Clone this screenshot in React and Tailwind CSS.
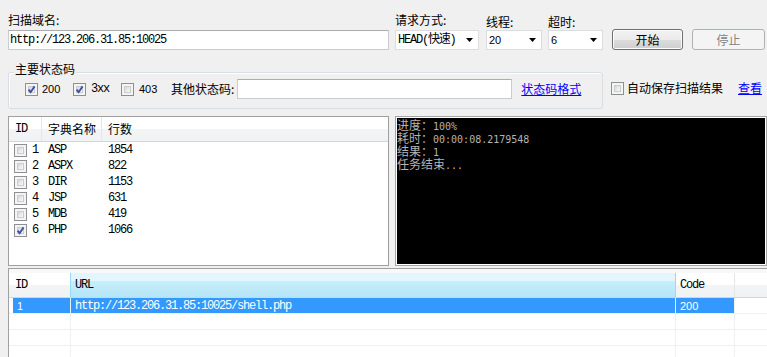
import React from "react";

const CJK = "[font-family:'Noto_Sans_CJK_SC','Liberation_Sans',sans-serif]";
const MONO = "[font-family:'Liberation_Mono','Noto_Sans_CJK_SC',monospace] text-[12px] tracking-[-1.2px]";
const SANS = "[font-family:'Liberation_Sans','Noto_Sans_CJK_SC',sans-serif] text-[11px]";
const HDR = "bg-[linear-gradient(#ffffff_0%,#ffffff_50%,#f3f4f6_50%,#f1f2f4_100%)]";
const CMONO = "text-[10px] leading-[13px] [font-family:'DejaVu_Sans_Mono',monospace]";

function Check({ checked = false }) {
  return (
    <span className="relative inline-block w-[13px] h-[13px] shrink-0 border border-[#8e8f8f] bg-[#f4f4f4]">
      <span className="absolute inset-[2px] border border-[#c9ccd0] bg-[linear-gradient(135deg,#d3d5d9_0%,#eceded_60%,#f8f8f8_100%)]" />
      {checked && (
        <svg className="absolute inset-0" width="11" height="11" viewBox="0 0 11 11">
          <path d="M2.6 5.6 L4.6 8.2 L8.6 2.4" fill="none" stroke="#3b54a3" strokeWidth="1.9" />
        </svg>
      )}
    </span>
  );
}

function Arrow() {
  return (
    <svg width="7" height="4" viewBox="0 0 7 4" className="shrink-0">
      <path d="M0 0 H7 L3.5 4 Z" fill="#000000" />
    </svg>
  );
}

function Select({ className, children }) {
  return (
    <div className={"h-[20px] border border-[#dadde2] bg-white flex items-center justify-between pl-[2px] pr-[5px] " + className}>
      <div className="flex items-center">{children}</div>
      <Arrow />
    </div>
  );
}

const dictRows = [
  ["1", "ASP", "1854", false],
  ["2", "ASPX", "822", false],
  ["3", "DIR", "1153", false],
  ["4", "JSP", "631", false],
  ["5", "MDB", "419", false],
  ["6", "PHP", "1066", true],
];

export default function App() {
  return (
    <div className={"w-[767px] h-[357px] overflow-hidden bg-[#f0f0f0] text-[12px] leading-[14px] text-black pt-[12px] " + CJK}>
      {/* Row 1 */}
      <div className="flex pl-[8px] h-[38px]">
        <div className="w-[381px] flex flex-col">
          <div className="h-[18px] leading-[16px]">扫描域名:</div>
          <div className="h-[20px] border border-[#c9cdd3] border-t-[#abadb3] bg-white flex items-center pl-[1px]">
            <span className={MONO}>http://123.206.31.85:10025</span>
          </div>
        </div>
        <div className="ml-[6px] w-[84px] flex flex-col">
          <div className="h-[18px] leading-[16px]">请求方式:</div>
          <Select className="w-[84px]">
            <span className={MONO}>HEAD(快速)</span>
          </Select>
        </div>
        <div className="ml-[7px] w-[56px] flex flex-col">
          <div className="h-[18px] leading-[16px] pt-[2px]">线程:</div>
          <Select className="w-[56px]">
            <span className={SANS}>20</span>
          </Select>
        </div>
        <div className="ml-[6px] w-[55px] flex flex-col">
          <div className="h-[18px] leading-[16px] pt-[2px]">超时:</div>
          <Select className="w-[55px]">
            <span className={SANS}>6</span>
          </Select>
        </div>
        <div className="ml-[9px] mt-[17px] w-[71px] h-[21px] rounded-[3px] border border-[#707070] bg-[linear-gradient(#f2f2f2_0%,#ebebeb_50%,#dddddd_50%,#cfcfcf_100%)] shadow-[inset_0_0_0_1px_#fcfcfc] flex items-center justify-center">
          开始
        </div>
        <div className="ml-[9px] mt-[17px] w-[73px] h-[21px] rounded-[3px] border border-[#adb2b5] bg-[#f4f4f4] text-[#838383] flex items-center justify-center">
          停止
        </div>
      </div>

      {/* Row 2 */}
      <div className="flex mt-[22px] pl-[8px]">
        <div className="w-[595px] h-[37px] border border-[#d5dfe5] rounded-[3px] shadow-[inset_1px_1px_0_#ffffff]">
          <div className="-mt-[11px] ml-[5px] w-fit px-[1px] bg-[#f0f0f0] leading-[14px] h-[14px]">主要状态码</div>
          <div className="flex items-center mt-[3px] pl-[16px] h-[20px]">
            <div className="w-[48px] flex items-center">
              <Check checked />
              <span className={"ml-[4px] " + SANS}>200</span>
            </div>
            <div className="w-[48px] flex items-center">
              <Check checked />
              <span className={"ml-[5px] " + MONO}>3xx</span>
            </div>
            <div className="w-[50px] flex items-center">
              <Check />
              <span className={"ml-[5px] " + SANS}>403</span>
            </div>
            <span>其他状态码:</span>
            <div className="ml-[3px] w-[275px] h-[20px] border border-[#c9cdd3] border-t-[#abadb3] bg-white" />
            <span className="ml-[9px] text-[#0000ff] underline">状态码格式</span>
          </div>
        </div>
        <div className="flex items-center ml-[8px] mt-[9px] h-[14px]">
          <Check />
          <span className="ml-[3px]">自动保存扫描结果</span>
          <span className="ml-[15px] text-[#0000ff] underline">查看</span>
        </div>
      </div>

      {/* Row 3 */}
      <div className="flex mt-[7px] pl-[8px] h-[150px]">
        <div className="w-[381px] h-full border border-[#a0a0a0] bg-white">
          <div className={"flex h-[25px] border-b border-[#d5d5d5] " + HDR}>
            <div className={"w-[33px] border-r border-[#e3e6ea] pl-[6px] flex items-center " + MONO}>ID</div>
            <div className="w-[60px] border-r border-[#e3e6ea] pl-[6px] flex items-center">字典名称</div>
            <div className="flex-1 pl-[6px] flex items-center">行数</div>
          </div>
          {dictRows.map(([id, name, count, checked]) => (
            <div key={id} className="flex items-center h-[16px] pl-[5px]">
              <Check checked={checked} />
              <span className={"ml-[5px] w-[16px] " + MONO}>{id}</span>
              <span className={"w-[60px] " + MONO}>{name}</span>
              <span className={MONO}>{count}</span>
            </div>
          ))}
        </div>
        <div className="ml-[6px] w-[372px] h-full border border-[#a5a5a5] bg-white p-[1px]">
          <div className="w-full h-full bg-black text-[#b4b4b4] leading-[13px]">
            <div className="flex items-baseline h-[13px]">
              <span className="text-[12px] leading-[13px]">进度：</span>
              <span className={CMONO}>100%</span>
            </div>
            <div className="flex items-baseline h-[13px]">
              <span className="text-[12px] leading-[13px]">耗时：</span>
              <span className={CMONO}>00:00:08.2179548</span>
            </div>
            <div className="flex items-baseline h-[13px]">
              <span className="text-[12px] leading-[13px]">结果：</span>
              <span className={CMONO}>1</span>
            </div>
            <div className="flex items-baseline h-[13px]">
              <span className="text-[12px] leading-[13px]">任务结束</span>
              <span className={CMONO}>...</span>
            </div>
          </div>
        </div>
      </div>

      {/* Row 4 */}
      <div className="mt-[2px] ml-[8px] w-[770px] h-[100px] border border-[#a0a0a0] bg-white">
        <div className="h-[4px] bg-[#f8f8f8]" />
        <div className="flex h-[25px] border-b border-[#d5d5d5]">
          <div className={"w-[61px] pl-[6px] flex items-center " + HDR + " " + MONO}>ID</div>
          <div className={"w-[606px] border-l border-r border-[#96d9f9] bg-[linear-gradient(#e4f6fd_0%,#e4f6fd_32%,#c9eefb_32%,#b4e5f7_100%)] pl-[4px] flex items-center " + MONO}>URL</div>
          <div className={"w-[59px] border-r border-[#e3e6ea] pl-[4px] flex items-center " + HDR + " " + MONO}>Code</div>
          <div className={"flex-1 " + HDR} />
        </div>
        <div className="flex h-[16px] border-b border-[#f0f0f0] text-white">
          <div className="w-[61px] pl-[4px] flex">
            <div className={"flex-1 bg-[#3399ff] pl-[4px] flex items-center " + SANS}>1</div>
          </div>
          <div className={"w-[606px] border-l border-r border-[#e8f1f8] bg-[#3399ff] pl-[4px] flex items-center " + MONO}>
            http://123.206.31.85:10025/shell.php
          </div>
          <div className={"w-[59px] border-r border-[#f0f0f0] bg-[#3399ff] pl-[4px] flex items-center " + SANS}>200</div>
          <div className="flex-1" />
        </div>
        {[0, 1, 2].map((i) => (
          <div key={i} className="flex h-[16px] border-b border-[#f0f0f0]">
            <div className="w-[61px]" />
            <div className="w-[606px] border-l border-r border-[#f0f0f0]" />
            <div className="w-[59px] border-r border-[#f0f0f0]" />
            <div className="flex-1" />
          </div>
        ))}
      </div>
    </div>
  );
}
